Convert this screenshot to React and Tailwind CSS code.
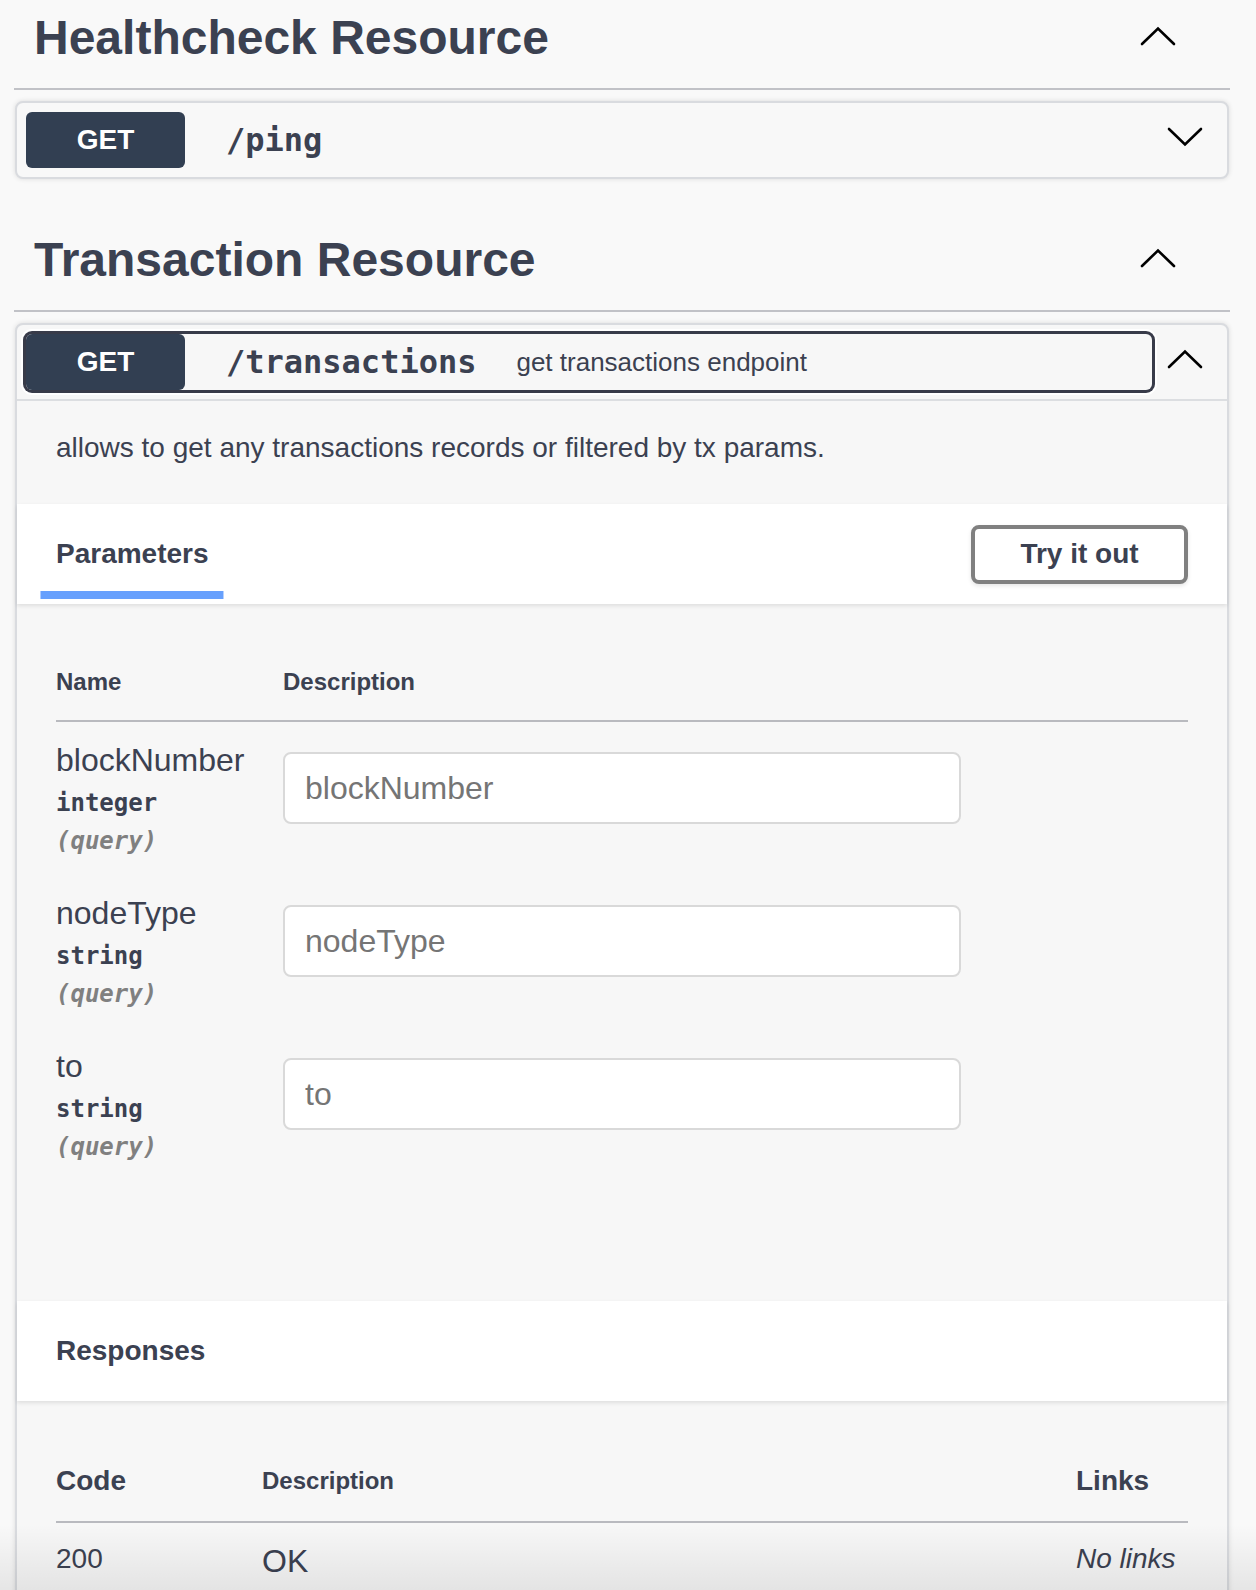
import React from "react";

function Chevron({ up }) {
  return (
    <svg width="36" height="20" viewBox="0 0 36 20" className="block">
      <polyline
        points={up ? "2,18 18,2.5 34,18" : "2,2 18,17.5 34,2"}
        fill="none"
        stroke="#000"
        strokeWidth="2.6"
        strokeLinecap="round"
        strokeLinejoin="miter"
      />
    </svg>
  );
}

function Badge() {
  return (
    <div className="flex h-[56px] w-[159px] shrink-0 items-center justify-center rounded-[6px] bg-[#323f52] text-[28px] font-bold leading-[32px] text-white">
      GET
    </div>
  );
}

function TagHeader({ title }) {
  return (
    <div className="flex items-start justify-between border-b-2 border-[#c1c2c7] pb-[26px] pl-[20px] pr-[54px] pt-[14px]">
      <h3 className="text-[48px] font-bold leading-[48px]">{title}</h3>
      <div className="mt-[12px]">
        <Chevron up />
      </div>
    </div>
  );
}

const params = [
  { name: "blockNumber", type: "integer" },
  { name: "nodeType", type: "string" },
  { name: "to", type: "string" },
];

export default function App() {
  return (
    <div className="relative h-[1590px] overflow-hidden bg-[#f9f9f9] font-['Liberation_Sans',Arial,Helvetica,sans-serif] text-[#3b4151]">
      <div className="ml-[14px] w-[1216px]">
        <TagHeader title="Healthcheck Resource" />

        <div className="mx-[1px] mt-[11px] rounded-[8px] border-2 border-[#d9dbdf] bg-[#f8f8f8] shadow-[0_0_5px_rgba(0,0,0,0.12)]">
          <div className="flex p-[9px]">
            <div className="flex flex-1 items-center">
              <Badge />
              <span className="ml-[41px] font-['DejaVu_Sans_Mono',monospace] text-[32px] font-bold leading-[38px]">
                /ping
              </span>
            </div>
            <div className="flex w-[66px] items-center justify-center pb-[6px]">
              <Chevron />
            </div>
          </div>
        </div>

        <div className="mt-[43px]">
          <TagHeader title="Transaction Resource" />
        </div>

        <div className="mx-[1px] mt-[11px] rounded-[8px] border-2 border-[#d9dbdf] bg-[#f7f7f7] pb-[200px] shadow-[0_0_5px_rgba(0,0,0,0.12)]">
          <div className="flex border-b-2 border-[#dcdee1] p-[9px]">
            <div className="flex flex-1 items-center rounded-[6px] shadow-[0_0_0_3px_#383b49,0_0_0_5px_#ffffff]">
              <Badge />
              <span className="ml-[41px] font-['DejaVu_Sans_Mono',monospace] text-[32px] font-bold leading-[38px]">
                /transactions
              </span>
              <span className="ml-[40px] text-[26px] leading-[30px]">get transactions endpoint</span>
            </div>
            <div className="flex w-[66px] items-center justify-center pb-[6px]">
              <Chevron up />
            </div>
          </div>

          <div className="px-[39px] pb-[40px] pt-[31px] text-[28px] leading-[32px]">
            allows to get any transactions records or filtered by tx params.
          </div>

          <div className="flex h-[100px] items-center justify-between bg-white px-[39px] shadow-[0_2px_4px_rgba(0,0,0,0.1)]">
            <h4 className="text-[28px] font-bold leading-[32px]">
              <span className="relative inline-block">
                Parameters
                <span className="absolute bottom-[-29px] left-1/2 h-[8px] w-[120%] -translate-x-1/2 bg-[#67a0fd]" />
              </span>
            </h4>
            <button className="h-[59px] w-[217px] rounded-[8px] border-4 border-[#808080] bg-white text-[28px] font-bold leading-[32px] text-[#3b4151] shadow-[0_2px_4px_rgba(0,0,0,0.1)]">
              Try it out
            </button>
          </div>

          <div className="px-[39px] pb-[120px] pt-[40px]">
            <div className="grid grid-cols-[227px_1fr] items-center border-b-2 border-[#b9babf] py-[24px] text-[24px] font-bold leading-[28px]">
              <div>Name</div>
              <div>Description</div>
            </div>
            {params.map((p) => (
              <div key={p.name} className="grid grid-cols-[227px_1fr] items-start py-[20px]">
                <div>
                  <div className="text-[32px] leading-[37px]">{p.name}</div>
                  <div className="py-[10px] font-['DejaVu_Sans_Mono',monospace] text-[24px] font-bold leading-[28px]">
                    {p.type}
                  </div>
                  <div className="font-['DejaVu_Sans_Mono',monospace] text-[24px] font-bold italic leading-[28px] text-[#808080]">
                    (query)
                  </div>
                </div>
                <div>
                  <input
                    type="text"
                    placeholder={p.name}
                    className="my-[10px] block h-[72px] w-[678px] rounded-[8px] border-2 border-[#d9d9d9] bg-white px-[20px] font-['Liberation_Sans',Arial,sans-serif] text-[32px] text-[#3b4151] outline-none placeholder:text-[#757575]"
                  />
                </div>
              </div>
            ))}
          </div>

          <div className="flex h-[100px] items-center bg-white px-[39px] shadow-[0_2px_4px_rgba(0,0,0,0.1)]">
            <h4 className="text-[28px] font-bold leading-[32px]">Responses</h4>
          </div>

          <div className="px-[39px] pt-[40px]">
            <div className="grid grid-cols-[206px_1fr_112px] items-center border-b-2 border-[#b9babf] py-[24px] font-bold">
              <div className="text-[28px] leading-[32px]">Code</div>
              <div className="text-[24px] leading-[28px]">Description</div>
              <div className="text-[28px] leading-[32px]">Links</div>
            </div>
            <div className="grid grid-cols-[206px_1fr_112px] items-start py-[20px]">
              <div className="text-[28px] leading-[32px]">200</div>
              <div className="text-[32px] leading-[37px]">OK</div>
              <div className="text-[28px] italic leading-[32px]">No links</div>
            </div>
          </div>
        </div>
      </div>

      <div className="pointer-events-none absolute bottom-0 left-0 right-0 h-[66px] bg-[linear-gradient(to_bottom,rgba(0,0,0,0),rgba(0,0,0,0.08))]" />
    </div>
  );
}
